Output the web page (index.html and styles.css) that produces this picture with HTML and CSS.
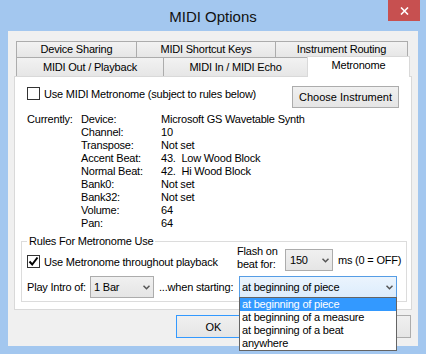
FILE: index.html
```html
<!DOCTYPE html>
<html lang="en">
<head>
    <meta charset="UTF-8">
    <title>MIDI Options</title>
    <link rel="stylesheet" href="styles.css">
</head>
<body>
    <div class="window">
        <div class="titlebar">
            <span class="title">MIDI Options</span>
            <div class="close">
                <svg width="9" height="8" viewBox="0 0 9 8"><path d="M1 0.5 L8 7.5 M8 0.5 L1 7.5" stroke="#fff" stroke-width="1.6" fill="none"/></svg>
            </div>
        </div>

        <div class="client">
            <div class="tabs">
                <div class="tab-row back">
                    <div class="tab t-sharing">Device Sharing</div>
                    <div class="tab t-keys">MIDI Shortcut Keys</div>
                    <div class="tab t-routing">Instrument Routing</div>
                </div>
                <div class="tab-row front">
                    <div class="tab t-out">MIDI Out / Playback</div>
                    <div class="tab t-in">MIDI In / MIDI Echo</div>
                    <div class="tab t-metro selected">Metronome</div>
                </div>
            </div>

            <div class="panel">
                <div class="top-row">
                    <div class="check">
                        <span class="box"></span>
                        <span>Use MIDI Metronome (subject to rules below)</span>
                    </div>
                    <button class="btn choose">Choose Instrument</button>
                </div>

                <div class="info">
                    <span>Currently:</span><span>Device:</span><span>Microsoft GS Wavetable Synth</span>
                    <span></span><span>Channel:</span><span>10</span>
                    <span></span><span>Transpose:</span><span>Not set</span>
                    <span></span><span>Accent Beat:</span><span>43.&nbsp; Low Wood Block</span>
                    <span></span><span>Normal Beat:</span><span>42.&nbsp; Hi Wood Block</span>
                    <span></span><span>Bank0:</span><span>Not set</span>
                    <span></span><span>Bank32:</span><span>Not set</span>
                    <span></span><span>Volume:</span><span>64</span>
                    <span></span><span>Pan:</span><span>64</span>
                </div>

                <div class="group">
                    <div class="legend">Rules For Metronome Use</div>
                    <div class="rule-row first">
                        <div class="check throughout">
                            <span class="box">
                                <svg width="11" height="11" viewBox="0 0 11 11"><path d="M1.5 5.5 L4.2 8.5 L9.5 1.5" stroke="#000" stroke-width="2" fill="none"/></svg>
                            </span>
                            <span>Use Metronome throughout playback</span>
                        </div>
                        <div class="flash">Flash on<br>beat for:</div>
                        <div class="combo c-flash">
                            <span>150</span>
                            <svg class="arrow" width="7" height="5" viewBox="0 0 7 5"><path d="M0.5 0.8 L3.5 3.8 L6.5 0.8" stroke="#555" stroke-width="1.5" fill="none"/></svg>
                        </div>
                        <div class="ms">ms (0 = OFF)</div>
                    </div>
                    <div class="rule-row second">
                        <div class="intro">Play Intro of:</div>
                        <div class="combo c-intro">
                            <span>1 Bar</span>
                            <svg class="arrow" width="7" height="5" viewBox="0 0 7 5"><path d="M0.5 0.8 L3.5 3.8 L6.5 0.8" stroke="#555" stroke-width="1.5" fill="none"/></svg>
                        </div>
                        <div class="when">...when starting:</div>
                        <div class="combo c-start open">
                            <span>at beginning of piece</span>
                            <svg class="arrow" width="7" height="5" viewBox="0 0 7 5"><path d="M0.5 0.8 L3.5 3.8 L6.5 0.8" stroke="#555" stroke-width="1.5" fill="none"/></svg>
                        </div>
                    </div>
                </div>
            </div>

            <!-- the other two buttons sit under the open list, so no labels show -->
            <div class="buttons">
                <button class="btn default">OK</button>
                <button class="btn"></button>
                <button class="btn"></button>
            </div>
        </div>

        <ul class="dropdown-list">
            <li class="hilite">at beginning of piece</li>
            <li>at beginning of a measure</li>
            <li>at beginning of a beat</li>
            <li>anywhere</li>
        </ul>
    </div>
</body>
</html>
```

FILE: styles.css
```css
* {
    box-sizing: border-box;
}

body {
    margin: 0;
    background-color: #a3c7ef;
    font-family: 'Liberation Sans', Arial, sans-serif;
    font-size: 11px;
    letter-spacing: -0.2px;
    color: #000;
}

.window {
    position: relative;
    width: 426px;
    height: 354px;
}

/* title bar */
.titlebar {
    position: relative;
    height: 31px;
    padding-top: 1px;
    text-align: center;
    font-size: 15px;
    line-height: 31px;
    letter-spacing: 0;
    color: #111;
}

.close {
    position: absolute;
    top: 0;
    right: 6px;
    width: 32px;
    height: 21px;
    background-color: #c75050;
    display: flex;
    justify-content: center;
    align-items: center;
}

.client {
    margin: 0 8px;
    height: 315px;
    background-color: #f0f0f0;
    padding: 10px 0 0 6px;
}

/* tabs */
.tabs {
    margin-left: 2px;
}

.tab-row {
    display: flex;
    align-items: flex-start;
}

.tab {
    border: 1px solid #acacac;
    border-bottom: none;
    background: linear-gradient(#f2f2f2, #e6e6e6);
    text-align: center;
    margin-left: -1px;
    white-space: nowrap;
}

.tab:first-child {
    margin-left: 0;
}

.back .tab {
    height: 16px;
    line-height: 15px;
}

.front .tab {
    height: 19px;
    line-height: 19px;
}

.t-sharing { width: 121px; }
.t-keys { width: 140px; }
.t-routing { width: 133px; }
.t-out { width: 148px; }
.t-in { width: 145px; }

.front .tab.selected {
    position: relative;
    z-index: 1;
    width: 103px;
    height: 21px;
    margin-top: -1px;
    margin-bottom: -1px;
    line-height: 17px;
    background: #fff;
    border-color: #d9d9d9;
}

/* tab page */
.panel {
    width: 398px;
    height: 234px;
    border: 1px solid #d9d9d9;
    background-color: #fff;
    padding: 9px 4px 0 6px;
}

.top-row {
    display: flex;
    justify-content: space-between;
    align-items: flex-start;
    padding: 0 8px 0 6px;
}

.check {
    display: flex;
    align-items: center;
    height: 13px;
    white-space: nowrap;
}

.top-row .check {
    margin-top: 1px;
}

.box {
    width: 13px;
    height: 13px;
    border: 1px solid #333;
    background-color: #fff;
    margin-right: 4px;
    display: flex;
    justify-content: center;
    align-items: center;
    flex-shrink: 0;
}

.btn {
    height: 22px;
    border: 1px solid #acacac;
    background: linear-gradient(#f0f0f0, #e5e5e5);
    font: inherit;
    color: #000;
    padding: 0;
    text-align: center;
}

.choose {
    width: 107px;
}

.info {
    display: grid;
    grid-template-columns: 54px 80px auto;
    line-height: 13px;
    margin-top: 5px;
    padding-left: 6px;
    white-space: nowrap;
}

/* rules group */
.group {
    height: 61px;
    margin-top: 11px;
    border: 1px solid #dcdcdc;
    padding: 0 0 3px 5px;
}

.legend {
    width: fit-content;
    margin: -7px 0 -6px 0;
    padding: 0 2px;
    line-height: 13px;
    background-color: #fff;
}

.rule-row {
    display: flex;
    white-space: nowrap;
}

.rule-row.first {
    align-items: flex-start;
    height: 29px;
}

.rule-row.second {
    align-items: center;
    margin-top: 5px;
    height: 22px;
}

.throughout {
    width: 210px;
    margin-top: 13px;
}

.flash {
    width: 48px;
    margin-top: 3px;
    line-height: 13px;
}

.ms {
    margin-top: 12px;
    line-height: 13px;
}

.combo {
    height: 22px;
    border: 1px solid #acacac;
    background: linear-gradient(#f0f0f0, #e5e5e5);
    display: flex;
    align-items: center;
    justify-content: space-between;
    padding: 0 3px 0 3px;
}

.combo.open {
    border-color: #569de5;
    background: linear-gradient(#ebf4fd, #dcecfc);
    padding-left: 2px;
}

.c-flash {
    width: 48px;
    margin-top: 7px;
    margin-right: 5px;
    padding-left: 4px;
}

.c-intro {
    width: 64px;
}

.c-start {
    width: 158px;
}

.intro {
    width: 63px;
}

.when {
    width: 80px;
    margin-left: 5px;
}

/* dialog buttons */
.buttons {
    display: flex;
    gap: 5px;
    margin: 5px 0 0 162px;
}

.buttons .btn {
    width: 75px;
    height: 23px;
}

.buttons .btn.default {
    border-color: #3399ff;
}

/* open combo list */
.dropdown-list {
    position: absolute;
    z-index: 5;
    left: 239px;
    top: 297px;
    width: 158px;
    margin: 0;
    padding: 0;
    list-style: none;
    border: 1px solid #646464;
    background-color: #fff;
    line-height: 13px;
    white-space: nowrap;
}

.dropdown-list li {
    padding-left: 2px;
}

.dropdown-list li.hilite {
    background-color: #3399ff;
    color: #fff;
}
```
